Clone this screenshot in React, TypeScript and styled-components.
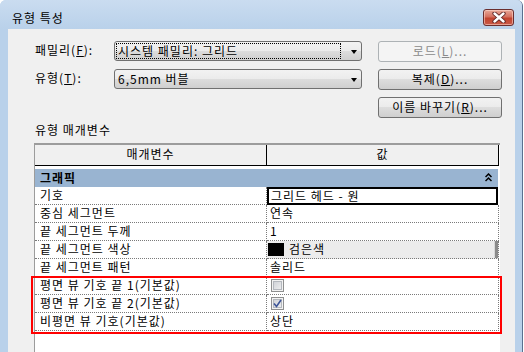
import React from "react";
import styled, { createGlobalStyle } from "styled-components";

const GlobalStyle = createGlobalStyle`
  html, body { margin: 0; padding: 0; background: #ffffff; }
  body {
    font-family: "Noto Sans CJK KR", "Noto Sans", sans-serif;
    font-size: 12px;
    letter-spacing: 1px;
    color: #000;
  }
  * { box-sizing: border-box; }
`;

const Window = styled.div`
  width: 523px;
  height: 352px;
  display: flex;
  flex-direction: column;
  background: #b9d1ea;
  border-right: 1px solid #5a7190;
  border-radius: 6px 6px 0 0;
  overflow: hidden;
`;

const TitleBar = styled.div`
  height: 29px;
  flex: none;
  display: flex;
  align-items: flex-start;
  justify-content: space-between;
  padding: 0 8px 0 12px;
  background: linear-gradient(#cadcf0, #b9d1ea);
`;

const Title = styled.div`
  margin-top: 11px;
  line-height: 14px;
`;

const CloseButton = styled.div`
  margin-top: 9px;
  width: 31px;
  height: 17px;
  border: 1px solid #6a2e2e;
  border-radius: 3px;
  background: linear-gradient(#e8a898 0%, #d4705f 45%, #c2442f 55%, #c95a48 100%);
  box-shadow: inset 0 0 0 1px rgba(255, 220, 210, 0.55);
  display: flex;
  align-items: center;
  justify-content: center;
`;

const Frame = styled.div`
  flex: 1;
  display: flex;
  padding: 0 7px 0 8px;
  min-height: 0;
`;

const Body = styled.div`
  flex: 1;
  background: #f0f0f0;
  display: flex;
  flex-direction: column;
  padding: 12px 13px 0 26px;
  min-height: 0;
`;

const TopGrid = styled.div`
  display: grid;
  grid-template-columns: 80px 248px 1fr;
  grid-template-rows: repeat(3, 21px);
  row-gap: 7px;
`;

const FieldLabel = styled.div<{ $row: number }>`
  grid-column: 1;
  grid-row: ${(p) => p.$row};
  align-self: center;
  padding-left: 1px;
  line-height: 14px;
  margin-top: -3px;
`;

const Combo = styled.div<{ $row: number }>`
  grid-column: 2;
  grid-row: ${(p) => p.$row};
  align-self: start;
  height: 20px;
  border: 1px solid #707070;
  border-radius: 3px;
  background: linear-gradient(#f2f2f2 0%, #ebebeb 50%, #dddddd 50%, #cfcfcf 100%);
  display: flex;
  align-items: center;
  padding: 1px 4px 1px 1px;
`;

const ComboText = styled.div<{ $focus?: boolean }>`
  flex: 1;
  height: 16px;
  line-height: 14px;
  padding-left: 1px;
  border: 1px ${(p) => (p.$focus ? "dotted #000" : "solid transparent")};
  margin-right: 10px;
`;

const Arrow = styled.div`
  width: 0;
  height: 0;
  border-left: 3.5px solid transparent;
  border-right: 3.5px solid transparent;
  border-top: 4px solid #000;
  margin-top: 1px;
`;

const Button = styled.div<{ $row: number; $disabled?: boolean }>`
  grid-column: 3;
  grid-row: ${(p) => p.$row};
  justify-self: end;
  width: 124px;
  height: 21px;
  border: 1px solid ${(p) => (p.$disabled ? "#adb2b5" : "#707070")};
  border-radius: 3px;
  background: ${(p) =>
    p.$disabled
      ? "#f4f4f4"
      : "linear-gradient(#f2f2f2 0%, #ebebeb 50%, #dddddd 50%, #cfcfcf 100%)"};
  color: ${(p) => (p.$disabled ? "#8a8a8a" : "#000")};
  display: flex;
  align-items: center;
  justify-content: center;
  line-height: 14px;
  padding-bottom: 2px;
`;

const U = styled.span`
  text-decoration: underline;
  text-underline-offset: 1px;
`;

const SectionLabel = styled.div`
  margin-top: 5px;
  padding-left: 1px;
  line-height: 14px;
`;

const Table = styled.div`
  margin-top: 6px;
  width: 466px;
  flex: 1;
  background: #ffffff;
  border-top: 2px solid #9c9c9c;
  border-left: 1px solid #9c9c9c;
  display: flex;
  flex-direction: column;
`;

const HeaderRow = styled.div`
  display: grid;
  grid-template-columns: 232px 232px;
  height: 21px;
  margin-bottom: 3px;
`;

const HeaderCell = styled.div`
  background: #f0f0f0;
  border-right: 1px solid #000;
  border-bottom: 1px solid #000;
  display: flex;
  align-items: center;
  justify-content: center;
  line-height: 14px;
  padding-bottom: 2px;
`;

const GroupRow = styled.div`
  width: 463px;
  height: 18px;
  background: #99b4d1;
  display: flex;
  align-items: center;
  justify-content: space-between;
  padding: 0 6px 1px 5px;
  font-weight: bold;
  line-height: 14px;
`;

const Row = styled.div`
  display: grid;
  grid-template-columns: 232px 232px;
  height: 18px;
`;

const Cell = styled.div<{ $value?: boolean }>`
  border-right: 1px dotted #7a7a7a;
  border-bottom: 1px dotted #7a7a7a;
  display: flex;
  align-items: center;
  padding-left: ${(p) => (p.$value ? "3px" : "5px")};
  line-height: 14px;
  padding-bottom: 1px;
  white-space: nowrap;
`;

const EditCell = styled.div`
  border: 2px solid #000;
  display: flex;
  align-items: center;
  padding-left: 2px;
  line-height: 14px;
  margin-right: 1px;
`;

const ColorCell = styled.div`
  background: #ececec;
  border-bottom: 1px dotted #7a7a7a;
  border-right: 1px dotted #7a7a7a;
  box-shadow: inset -3px 0 0 #8a8a8a, inset -4px 0 0 #d8d8d8;
  display: flex;
  align-items: center;
  gap: 5px;
  padding-left: 1px;
  line-height: 14px;
  padding-bottom: 1px;
`;

const Swatch = styled.span`
  width: 16px;
  height: 13px;
  background: #000;
  flex: none;
`;

const Highlight = styled.div`
  position: relative;
  &::after {
    content: "";
    position: absolute;
    top: -1px;
    bottom: -3px;
    left: -4px;
    right: -2px;
    border: 2px solid #ff0000;
    pointer-events: none;
  }
`;

const CheckBox = styled.span`
  width: 13px;
  height: 13px;
  margin-left: 1px;
  border: 1px solid #8e8f8f;
  background: linear-gradient(135deg, #c9ccd2, #f4f4f4);
  box-shadow: inset 0 0 0 1px #f2f2f2, inset 0 0 0 2px #b4b8be;
  display: flex;
  align-items: center;
  justify-content: center;
`;

const Chevrons = () => (
  <svg width="7" height="9" viewBox="0 0 7 9">
    <path d="M0.5 4 L3.5 1 L6.5 4 M0.5 8 L3.5 5 L6.5 8" fill="none" stroke="#000" strokeWidth="1.5" />
  </svg>
);

const CloseX = () => (
  <svg width="14" height="11" viewBox="0 0 14 11">
    <path d="M2.5 1.5 L11.5 9.5 M11.5 1.5 L2.5 9.5" stroke="#5a2323" strokeWidth="4.2" strokeLinecap="round" />
    <path d="M2.5 1.5 L11.5 9.5 M11.5 1.5 L2.5 9.5" stroke="#ffffff" strokeWidth="2.4" strokeLinecap="round" />
  </svg>
);

const Check = () => (
  <svg width="9" height="9" viewBox="0 0 9 9">
    <path d="M1 4.5 L3.5 7.5 L8 1" fill="none" stroke="#3d5598" strokeWidth="1.6" />
  </svg>
);

const rows: { name: string; value: React.ReactNode; kind?: "edit" | "color" }[] = [
  { name: "기호", value: "그리드 헤드 - 원", kind: "edit" },
  { name: "중심 세그먼트", value: "연속" },
  { name: "끝 세그먼트 두께", value: "1" },
  { name: "끝 세그먼트 색상", value: "검은색", kind: "color" },
  { name: "끝 세그먼트 패턴", value: "솔리드" },
];

const highlighted: { name: string; value: React.ReactNode }[] = [
  { name: "평면 뷰 기호 끝 1(기본값)", value: <CheckBox /> },
  { name: "평면 뷰 기호 끝 2(기본값)", value: <CheckBox><Check /></CheckBox> },
  { name: "비평면 뷰 기호(기본값)", value: "상단" },
];

export default function App() {
  return (
    <>
      <GlobalStyle />
      <Window>
        <TitleBar>
          <Title>유형 특성</Title>
          <CloseButton>
            <CloseX />
          </CloseButton>
        </TitleBar>
        <Frame>
          <Body>
            <TopGrid>
              <FieldLabel $row={1}>
                패밀리(<U>F</U>):
              </FieldLabel>
              <Combo $row={1}>
                <ComboText $focus>시스템 패밀리: 그리드</ComboText>
                <Arrow />
              </Combo>
              <Button $row={1} $disabled>
                로드(<U>L</U>)...
              </Button>
              <FieldLabel $row={2}>
                유형(<U>T</U>):
              </FieldLabel>
              <Combo $row={2}>
                <ComboText>6,5mm 버블</ComboText>
                <Arrow />
              </Combo>
              <Button $row={2}>
                복제(<U>D</U>)...
              </Button>
              <Button $row={3}>
                이름 바꾸기(<U>R</U>)...
              </Button>
            </TopGrid>
            <SectionLabel>유형 매개변수</SectionLabel>
            <Table>
              <HeaderRow>
                <HeaderCell>매개변수</HeaderCell>
                <HeaderCell>값</HeaderCell>
              </HeaderRow>
              <GroupRow>
                <span>그래픽</span>
                <Chevrons />
              </GroupRow>
              {rows.map((r) => (
                <Row key={r.name}>
                  <Cell>{r.name}</Cell>
                  {r.kind === "edit" ? (
                    <EditCell>{r.value}</EditCell>
                  ) : r.kind === "color" ? (
                    <ColorCell>
                      <Swatch />
                      {r.value}
                    </ColorCell>
                  ) : (
                    <Cell $value>{r.value}</Cell>
                  )}
                </Row>
              ))}
              <Highlight>
                {highlighted.map((r) => (
                  <Row key={r.name}>
                    <Cell>{r.name}</Cell>
                    <Cell $value>{r.value}</Cell>
                  </Row>
                ))}
              </Highlight>
            </Table>
          </Body>
        </Frame>
      </Window>
    </>
  );
}
